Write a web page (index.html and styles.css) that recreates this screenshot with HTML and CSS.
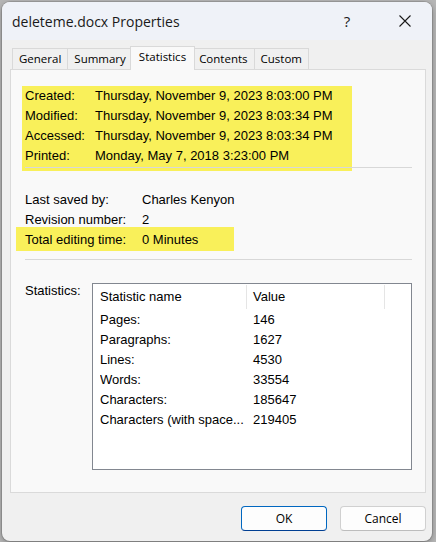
FILE: index.html
```html
<!DOCTYPE html>
<html>
<head>
<meta charset="utf-8">
<link rel="stylesheet" href="styles.css">
</head>
<body>
<div class="window">
  <div class="titlebar">
    <span class="title">deleteme.docx Properties</span>
    <span class="ctrl help">?</span>
    <span class="ctrl close"><svg width="12" height="12" viewBox="0 0 12 12"><path d="M0.5 0.5 L11.5 11.5 M11.5 0.5 L0.5 11.5" stroke="#1a1a1a" stroke-width="1.1" fill="none"/></svg></span>
  </div>
  <div class="content">
    <div class="tabs">
      <div class="tab">General</div>
      <div class="tab">Summary</div>
      <div class="tab active">Statistics</div>
      <div class="tab">Contents</div>
      <div class="tab">Custom</div>
    </div>
    <div class="panel">
      <div class="hl hl-dates">
        <div class="rows dates">
          <div class="row"><span class="lbl">Created:</span><span>Thursday, November 9, 2023 8:03:00 PM</span></div>
          <div class="row"><span class="lbl">Modified:</span><span>Thursday, November 9, 2023 8:03:34 PM</span></div>
          <div class="row"><span class="lbl">Accessed:</span><span>Thursday, November 9, 2023 8:03:34 PM</span></div>
          <div class="row"><span class="lbl">Printed:</span><span>Monday, May 7, 2018 3:23:00 PM</span></div>
        </div>
        <div class="sep sep-first"></div>
      </div>
      <div class="rows info">
        <div class="row"><span class="lbl">Last saved by:</span><span>Charles Kenyon</span></div>
        <div class="row"><span class="lbl">Revision number:</span><span>2</span></div>
        <div class="row hl hl-time"><span class="lbl">Total editing time:</span><span>0 Minutes</span></div>
      </div>
      <div class="sep sep-second"></div>
      <div class="stats">
        <span class="stats-lbl">Statistics:</span>
        <div class="listbox">
          <div class="lhead">
            <div class="hcell hname">Statistic name</div>
            <div class="hcell hval">Value</div>
          </div>
          <div class="lrow"><span class="cname">Pages:</span><span>146</span></div>
          <div class="lrow"><span class="cname">Paragraphs:</span><span>1627</span></div>
          <div class="lrow"><span class="cname">Lines:</span><span>4530</span></div>
          <div class="lrow"><span class="cname">Words:</span><span>33554</span></div>
          <div class="lrow"><span class="cname">Characters:</span><span>185647</span></div>
          <div class="lrow"><span class="cname">Characters (with space...</span><span>219405</span></div>
        </div>
      </div>
    </div>
    <div class="buttons">
      <button class="btn primary">OK</button>
      <button class="btn">Cancel</button>
    </div>
  </div>
</div>
</body>
</html>
```
FILE: styles.css
```css
* { box-sizing: border-box; }
html, body { margin: 0; }
body {
  width: 436px;
  height: 542px;
  overflow: hidden;
  background: #b6b6b6;
  padding: 2px 0 0 2px;
  font-family: "Liberation Sans", Arial, sans-serif;
  font-size: 13px;
  color: #000;
}
.window {
  width: 430px;
  height: 539px;
  background: #f0f0f0;
  border-radius: 8px;
  overflow: hidden;
  box-shadow: 0 0 0 1px rgba(0,0,0,0.12), 0 2px 6px rgba(0,0,0,0.3);
  display: flex;
  flex-direction: column;
}
.titlebar {
  height: 38px;
  flex: none;
  background: #eff2f8;
  display: flex;
  align-items: center;
  padding-left: 10px;
}
.title {
  font-family: "Open Sans", sans-serif;
  font-size: 14px;
  color: #1a1a1a;
  flex: 1;
}
.ctrl {
  width: 46px;
  height: 32px;
  display: flex;
  align-items: center;
  justify-content: center;
  font-family: "Open Sans", sans-serif;
  font-size: 15px;
  color: #1a1a1a;
}
.help { margin-right: 12px; }
.close { margin-right: 4px; }
.content {
  padding: 6px 6px 0 8px;
  display: flex;
  flex-direction: column;
}
.tabs {
  display: flex;
  align-items: flex-end;
  height: 23px;
  padding-left: 2px;
  position: relative;
  z-index: 1;
}
.tab {
  height: 21px;
  border: 1px solid #d9d9d9;
  border-bottom: none;
  margin-left: -1px;
  padding: 0 6px;
  background: #f0f0f0;
  font-family: "Open Sans", sans-serif;
  font-size: 11.5px;
  line-height: 20px;
  color: #000;
}
.tab:first-child { margin-left: 0; }
.tab.active {
  height: 24px;
  margin: 0 -2px -1px -3px;
  padding: 0 8px;
  background: #f9f9f9;
  line-height: 20px;
  position: relative;
  z-index: 2;
}
.panel {
  height: 424px;
  border: 1px solid #dadada;
  background: #f9f9f9;
  padding-left: 14px;
}
.hl { background: #f9f05a; }
.hl-dates {
  margin: 18px 0 0 -3px;
  padding: 0 0 3px 3px;
  width: 330px;
}
.rows .row {
  display: flex;
  line-height: 20px;
  height: 20px;
  white-space: nowrap;
}
.dates { margin-top: -2px; }
.dates .lbl { width: 70px; }
.sep {
  width: 387px;
  height: 1px;
  background: #d8d8d8;
}
.sep-first { margin-top: 1px; }
.info { margin-top: 19px; }
.info .lbl { width: 117px; }
.info .row.hl-time {
  height: 24px;
  margin: -3px 0 -1px -9px;
  padding: 3px 0 1px 9px;
  width: 218px;
}
.sep-second { margin-top: 9px; }
.stats {
  margin-top: 21px;
  display: flex;
  align-items: flex-start;
}
.stats-lbl {
  width: 67px;
  line-height: 20px;
}
.listbox {
  margin-top: 2px;
  width: 320px;
  height: 187px;
  border: 1px solid #828790;
  background: #fff;
}
.lhead {
  display: flex;
  height: 26px;
  align-items: flex-start;
}
.hcell {
  height: 24px;
  margin-top: 1px;
  line-height: 24px;
  border-right: 1px solid #e5e5e5;
}
.hname { width: 154px; padding-left: 7px; }
.hval { width: 138px; padding-left: 6px; }
.lrow {
  display: flex;
  line-height: 20px;
  height: 20px;
  padding-left: 7px;
  white-space: nowrap;
}
.cname { width: 153px; overflow: hidden; }
.buttons {
  display: flex;
  justify-content: flex-end;
  gap: 13px;
  margin-top: 13px;
}
.btn {
  width: 86px;
  height: 25px;
  border-radius: 4px;
  border: 1px solid #d0d0d0;
  border-bottom-color: #bdbdbd;
  background: #fdfdfd;
  font-family: "Open Sans", sans-serif;
  font-size: 12px;
  color: #000;
  padding: 0;
}
.btn.primary {
  border: 1px solid #0067c0;
  border-bottom-color: #003e92;
}
```
